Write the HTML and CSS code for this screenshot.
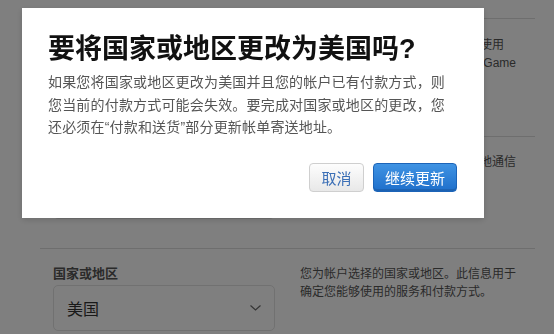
FILE: index.html
```html
<!DOCTYPE html>
<html lang="zh-CN">
<head>
<meta charset="utf-8">
<link rel="stylesheet" href="styles.css">
</head>
<body>
<div class="page">
  <div class="row row-a">
    <div class="field">
      <div class="field-label">昵称</div>
      <div class="select"><span class="select-value">用户</span></div>
    </div>
    <div class="help">您的昵称将显示给您的好友和其他使用<br>应用、游戏以及其他相关服务中的 Game Center 玩家。</div>
  </div>
  <div class="row row-b">
    <div class="field">
      <div class="field-label">电话号码</div>
      <div class="select"><span class="select-value">+86</span></div>
    </div>
    <div class="help">此信息将用于帐户安全验证以及本地通信</div>
  </div>
  <div class="row row-c">
    <div class="field">
      <div class="field-label">国家或地区</div>
      <div class="select">
        <span class="select-value">美国</span>
        <svg class="chevron" width="11" height="6" viewBox="0 0 11 6"><polyline points="0.5,0.5 5.5,5 10.5,0.5" fill="none" stroke="#6a6a6a" stroke-width="1.2"/></svg>
      </div>
    </div>
    <div class="help">您为帐户选择的国家或地区。此信息用于<br>确定您能够使用的服务和付款方式。</div>
  </div>
</div>
<div class="overlay">
  <div class="dialog">
    <h1 class="dialog-title">要将国家或地区更改为美国吗?</h1>
    <p class="dialog-text">如果您将国家或地区更改为美国并且您的帐户已有付款方式，则您当前的付款方式可能会失效。要完成对国家或地区的更改，您还必须在“付款和送货”部分更新帐单寄送地址。</p>
    <div class="dialog-actions">
      <button class="btn btn-cancel">取消</button>
      <button class="btn btn-primary">继续更新</button>
    </div>
  </div>
</div>
</body>
</html>
```

FILE: styles.css
```css
* { box-sizing: border-box; }
html, body { margin: 0; padding: 0; }
body {
  width: 554px;
  height: 334px;
  overflow: hidden;
  background: #ffffff;
  font-family: "Liberation Sans", "Noto Sans CJK SC", sans-serif;
  color: #333;
}
.page {
  height: 334px;
  overflow: hidden;
  padding: 18px 19px 0 40px;
}
.row {
  display: grid;
  grid-template-columns: 235px 235px;
  column-gap: 25px;
  border-top: 1px solid #dcdcdc;
}
.row-a { height: 118px; padding-top: 17px; }
.row-b { height: 112px; padding-top: 16px; }
.row-c { height: 86px; padding-top: 16px; }
.field { padding-left: 13px; }
.field-label {
  font-size: 13px;
  line-height: 18px;
  font-weight: bold;
  color: #555;
  margin-bottom: 2px;
}
.select {
  width: 222px;
  height: 46px;
  border: 1px solid #e2e2e2;
  border-radius: 5px;
  display: flex;
  align-items: center;
  justify-content: space-between;
  padding: 0 13px;
}
.select-value { font-size: 16px; color: #333; }
.help {
  font-size: 12px;
  line-height: 18px;
  color: #555;
}

.overlay {
  position: fixed;
  inset: 0;
  background: rgba(0,0,0,0.5);
  padding: 8px 0 0 22px;
}
.dialog {
  width: 462px;
  height: 210px;
  background: #fff;
  padding: 25px 27px 0 26px;
  box-shadow: 0 2px 6px rgba(0,0,0,0.15);
}
.dialog-title {
  margin: 0;
  font-size: 27px;
  line-height: 32px;
  font-weight: bold;
  color: #111;
}
.dialog-text {
  margin: 6px 0 0;
  font-size: 14px;
  line-height: 22.5px;
  color: #555;
  letter-spacing: 0.18px;
}
.dialog-actions {
  display: flex;
  justify-content: flex-end;
  gap: 9px;
  margin-top: 24px;
}
.btn {
  height: 29px;
  padding: 0;
  font-family: "Liberation Sans", "Noto Sans CJK SC", sans-serif;
  font-size: 15px;
  border-radius: 4px;
  cursor: pointer;
}
.btn-cancel {
  width: 55px;
  color: #3b6fb6;
  background: linear-gradient(#fdfdfd, #e8e8e8);
  border: 1px solid #cfcfcf;
}
.btn-primary {
  width: 84px;
  color: #fff;
  background: linear-gradient(#3f93e3, #1f6fcb);
  border: 1px solid #1c64b8;
  box-shadow: inset 0 -2px 0 rgba(0,0,0,0.12);
}
```
